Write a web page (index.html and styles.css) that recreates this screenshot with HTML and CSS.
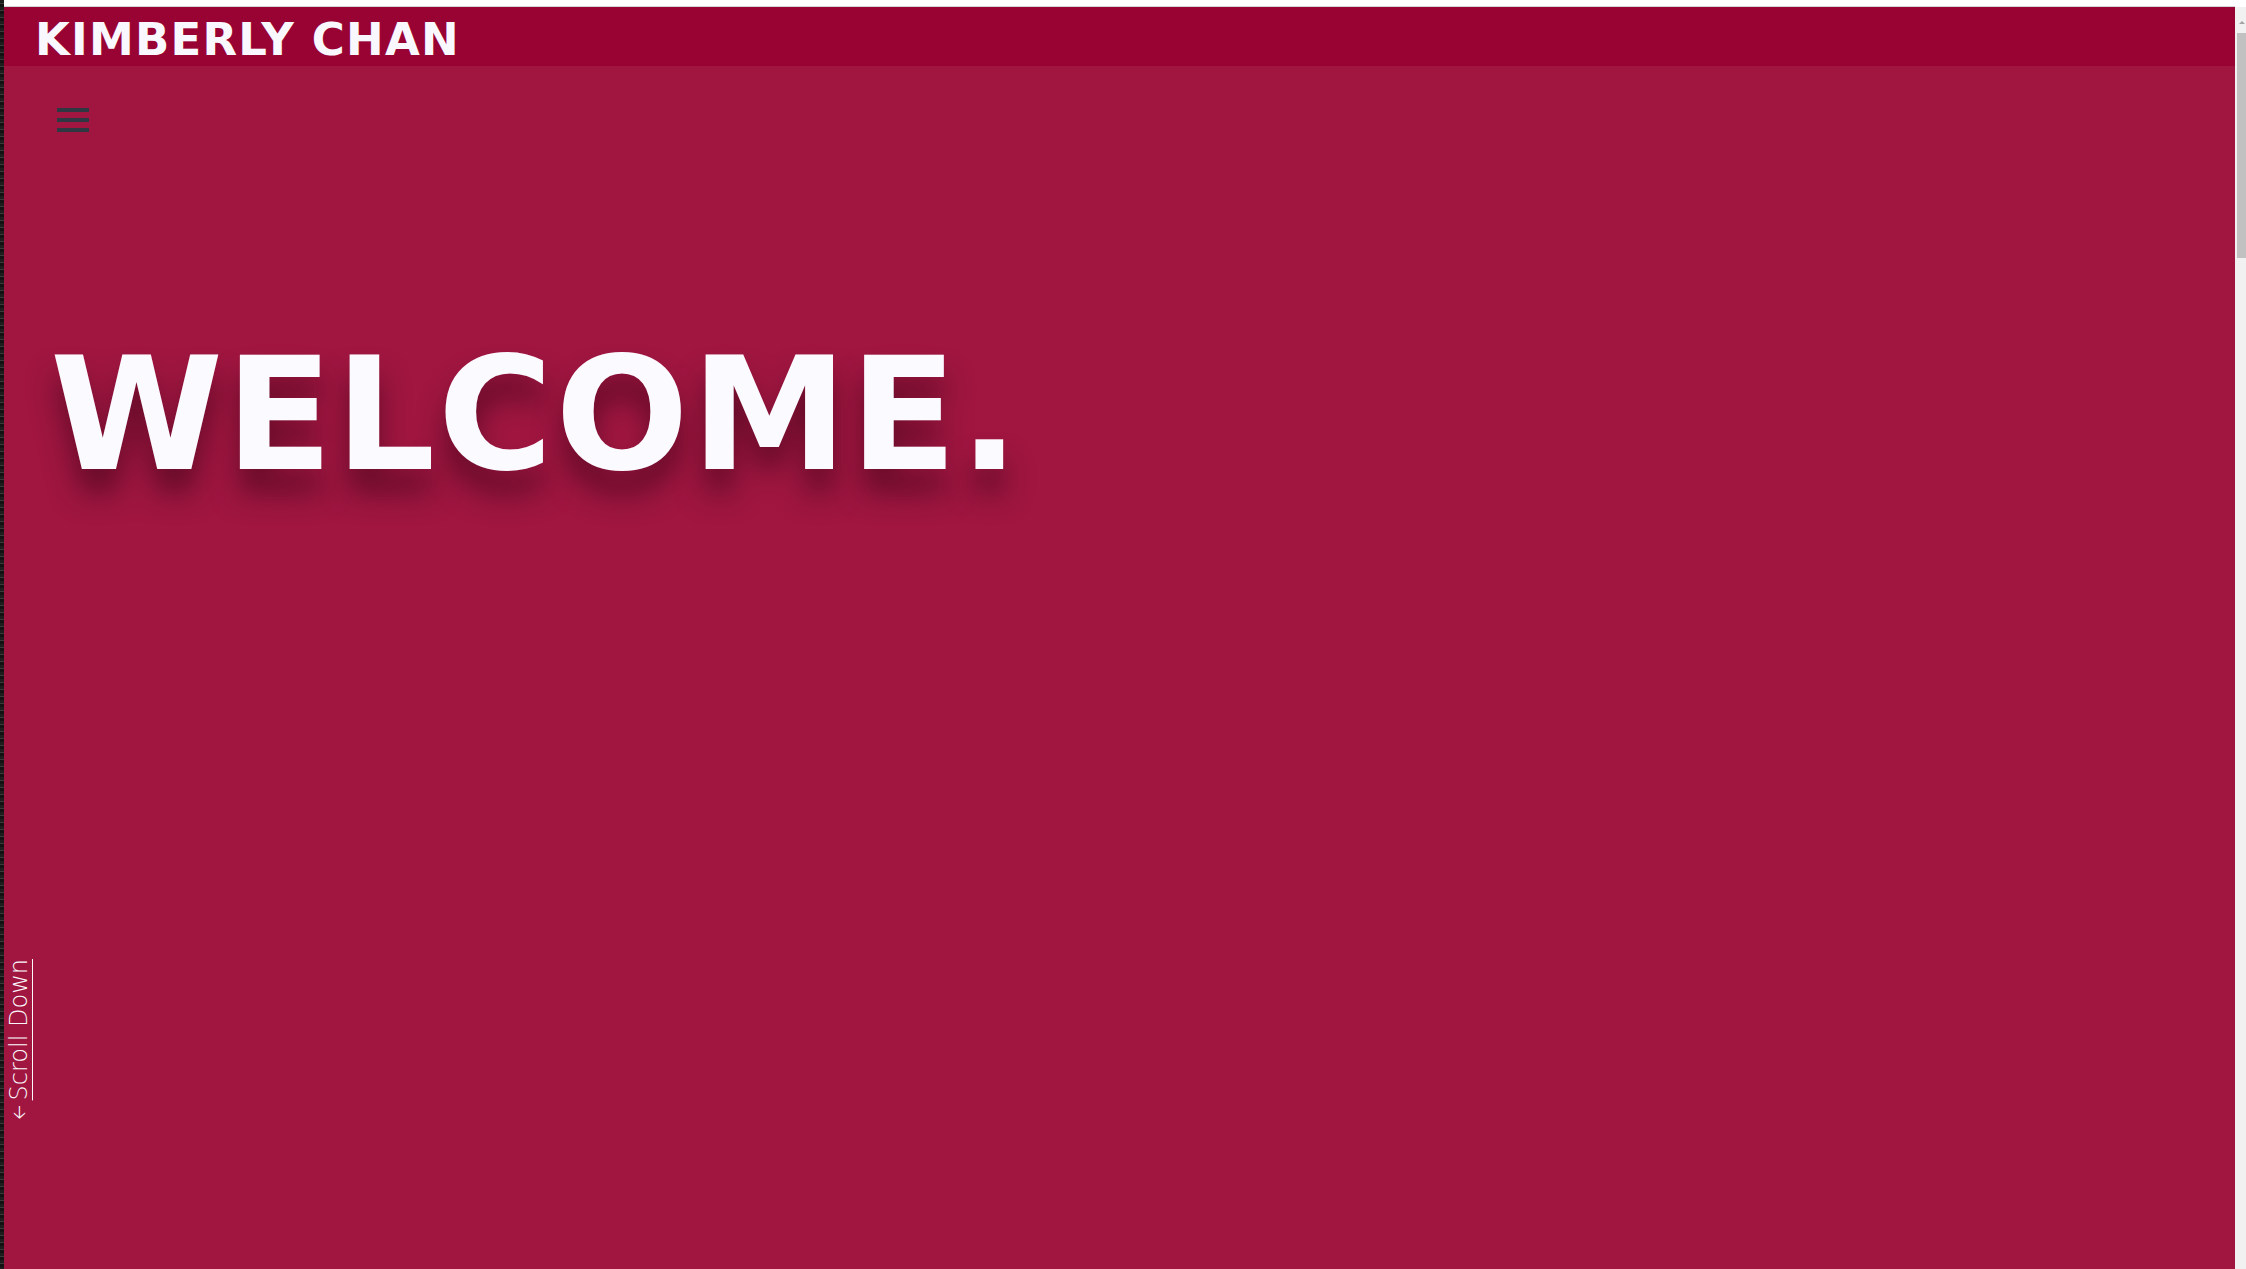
FILE: index.html
```html
<!DOCTYPE html>
<html lang="en">
<head>
<meta charset="utf-8">
<title>Kimberly Chan</title>
<link rel="stylesheet" href="styles.css">
</head>
<body>
<div class="frame">
  <div class="desk"></div>
  <div class="window">
    <div class="topstrip"></div>
    <header class="site-header">
      <span class="brand">KIMBERLY CHAN</span>
    </header>
    <main class="hero">
      <button class="menu" aria-label="Menu">
        <span class="bar"></span><span class="bar"></span><span class="bar"></span>
      </button>
      <h1 class="welcome">WELCOME.</h1>
      <a class="scroll" href="#"><span class="arrow">&#129123;</span><span class="scroll-text">Scroll Down</span></a>
    </main>
  </div>
  <div class="scrollbar">
    <div class="sb-up"></div>
    <div class="sb-thumb"></div>
  </div>
</div>
</body>
</html>
```

FILE: styles.css
```css
html, body {
  margin: 0;
  padding: 0;
  height: 100%;
  overflow: hidden;
}
body {
  font-family: "DejaVu Sans", "Liberation Sans", sans-serif;
  background: #ffffff;
}
.frame {
  display: flex;
  height: 1269px;
  width: 2246px;
}
.desk {
  width: 4px;
  flex: none;
  background: repeating-linear-gradient(180deg, #1d1d1d 0 3px, #3a3a3a 3px 4px, #121212 4px 7px);
}
.window {
  flex: 1;
  display: flex;
  flex-direction: column;
  min-width: 0;
}
.topstrip {
  height: 6px;
  background: #ffffff;
  border-bottom: 1px solid #d6d6d6;
  flex: none;
}
.site-header {
  height: 59px;
  flex: none;
  background: #990333;
  display: flex;
  align-items: center;
  padding-left: 31px;
}
.brand {
  color: #f9f8ff;
  font-weight: 700;
  font-size: 45px;
  letter-spacing: 1.2px;
  line-height: 1;
  margin-top: 6px;
}
.hero {
  flex: 1;
  background: #a01641;
  position: relative;
  display: flex;
  flex-direction: column;
  align-items: flex-start;
}
.menu {
  margin: 42px 0 0 53px;
  padding: 0;
  border: 0;
  background: none;
  width: 32px;
  display: flex;
  flex-direction: column;
  gap: 6px;
}
.bar {
  display: block;
  height: 4px;
  width: 32px;
  background: #2f3742;
}
.welcome {
  margin: 204px 0 0 46px;
  color: #fbfaff;
  font-weight: 700;
  font-size: 157px;
  line-height: 1;
  letter-spacing: 2.4px;
  text-shadow: 0 24px 28px rgba(45, 0, 18, 0.5);
}
.scroll {
  position: absolute;
  left: 1px;
  top: 893px;
  transform-origin: left top;
  transform: rotate(-90deg) translateX(-100%);
  color: #faf6fa;
  text-decoration: none;
  font-family: "DejaVu Sans", sans-serif;
  font-weight: 200;
  font-size: 24px;
  white-space: nowrap;
  line-height: 1.2;
  display: flex;
  align-items: center;
}
.arrow {
  font-size: 18px;
  font-weight: 400;
  margin-right: 5px;
  display: inline-block;
  transform: rotate(90deg);
}
.scroll-text {
  text-decoration: underline;
  text-decoration-thickness: 1px;
  text-underline-offset: 5px;
}
.scrollbar {
  width: 11px;
  flex: none;
  background: #f1f1f1;
  display: flex;
  flex-direction: column;
  align-items: flex-end;
  border-top: 7px solid #ffffff;
}
.sb-up {
  height: 26px;
  width: 11px;
  position: relative;
}
.sb-up::after {
  content: "";
  position: absolute;
  right: 1px;
  top: 14px;
  border-left: 3px solid transparent;
  border-right: 3px solid transparent;
  border-bottom: 3px solid #a3a3a3;
}
.sb-thumb {
  width: 9px;
  height: 225px;
  background: #c1c1c1;
}
```
